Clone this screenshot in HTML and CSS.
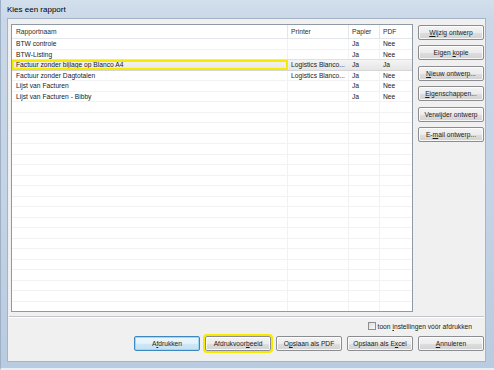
FILE: index.html
```html
<!DOCTYPE html>
<html>
<head>
<meta charset="utf-8">
<link rel="stylesheet" href="styles.css">
</head>
<body>
<div class="window">
  <div class="titlebar"><span class="title">Kies een rapport</span></div>
  <div class="client">
    <div class="top">
      <div class="list">
        <div class="row head"><div class="c c1">Rapportnaam</div><div class="c c2">Printer</div><div class="c c3">Papier</div><div class="c c4">PDF</div></div>
        <div class="row"><div class="c c1">BTW controle</div><div class="c c2"></div><div class="c c3">Ja</div><div class="c c4">Nee</div></div>
        <div class="row"><div class="c c1">BTW-Listing</div><div class="c c2"></div><div class="c c3">Ja</div><div class="c c4">Nee</div></div>
        <div class="row sel"><div class="c c1 mark">Factuur zonder bijlage op Blanco A4</div><div class="c c2">Logistics Blanco...</div><div class="c c3">Ja</div><div class="c c4">Ja</div></div>
        <div class="row"><div class="c c1">Factuur zonder Dagtotalen</div><div class="c c2">Logistics Blanco...</div><div class="c c3">Ja</div><div class="c c4">Nee</div></div>
        <div class="row"><div class="c c1">Lijst van Facturen</div><div class="c c2"></div><div class="c c3">Ja</div><div class="c c4">Nee</div></div>
        <div class="row"><div class="c c1">Lijst van Facturen - Bibby</div><div class="c c2"></div><div class="c c3">Ja</div><div class="c c4">Nee</div></div>
        <div class="row"><div class="c c1"></div><div class="c c2"></div><div class="c c3"></div><div class="c c4"></div></div>
        <div class="row"><div class="c c1"></div><div class="c c2"></div><div class="c c3"></div><div class="c c4"></div></div>
        <div class="row"><div class="c c1"></div><div class="c c2"></div><div class="c c3"></div><div class="c c4"></div></div>
        <div class="row"><div class="c c1"></div><div class="c c2"></div><div class="c c3"></div><div class="c c4"></div></div>
        <div class="row"><div class="c c1"></div><div class="c c2"></div><div class="c c3"></div><div class="c c4"></div></div>
        <div class="row"><div class="c c1"></div><div class="c c2"></div><div class="c c3"></div><div class="c c4"></div></div>
        <div class="row"><div class="c c1"></div><div class="c c2"></div><div class="c c3"></div><div class="c c4"></div></div>
        <div class="row"><div class="c c1"></div><div class="c c2"></div><div class="c c3"></div><div class="c c4"></div></div>
        <div class="row"><div class="c c1"></div><div class="c c2"></div><div class="c c3"></div><div class="c c4"></div></div>
        <div class="row"><div class="c c1"></div><div class="c c2"></div><div class="c c3"></div><div class="c c4"></div></div>
        <div class="row"><div class="c c1"></div><div class="c c2"></div><div class="c c3"></div><div class="c c4"></div></div>
        <div class="row"><div class="c c1"></div><div class="c c2"></div><div class="c c3"></div><div class="c c4"></div></div>
        <div class="row"><div class="c c1"></div><div class="c c2"></div><div class="c c3"></div><div class="c c4"></div></div>
        <div class="row"><div class="c c1"></div><div class="c c2"></div><div class="c c3"></div><div class="c c4"></div></div>
        <div class="row"><div class="c c1"></div><div class="c c2"></div><div class="c c3"></div><div class="c c4"></div></div>
        <div class="row"><div class="c c1"></div><div class="c c2"></div><div class="c c3"></div><div class="c c4"></div></div>
        <div class="row"><div class="c c1"></div><div class="c c2"></div><div class="c c3"></div><div class="c c4"></div></div>
        <div class="row"><div class="c c1"></div><div class="c c2"></div><div class="c c3"></div><div class="c c4"></div></div>
        <div class="row"><div class="c c1"></div><div class="c c2"></div><div class="c c3"></div><div class="c c4"></div></div>
        <div class="row"><div class="c c1"></div><div class="c c2"></div><div class="c c3"></div><div class="c c4"></div></div>
      </div>
      <div class="side">
        <div class="btn"><u>W</u>ijzig ontwerp</div>
        <div class="btn">Eigen <u>k</u>opie</div>
        <div class="btn"><u>N</u>ieuw ontwerp...</div>
        <div class="btn"><u>E</u>igenschappen...</div>
        <div class="btn">Verwi<u>j</u>der ontwerp</div>
        <div class="btn">E-<u>m</u>ail ontwerp...</div>
      </div>
    </div>
    <div class="sep"></div>
    <div class="checkrow"><span class="box"></span><span class="checklabel">toon <u>i</u>nstellingen vóór afdrukken</span></div>
    <div class="actions">
      <div class="btn default">A<u>f</u>drukken</div>
      <div class="btn marked">Afdrukvoor<u>b</u>eeld</div>
      <div class="btn">O<u>p</u>slaan als PDF</div>
      <div class="btn">Opslaan als E<u>x</u>cel</div>
      <div class="btn"><u>A</u>nnuleren</div>
    </div>
  </div>
</div>
</body>
</html>
```

FILE: styles.css
```css
html, body {
  margin: 0;
  padding: 0;
  background: #ffffff;
}

body {
  font-family: "Liberation Sans", Arial, sans-serif;
  font-size: 6.7px;
  color: #000;
}

.window {
  width: 494px;
  height: 370px;
  box-sizing: border-box;
  background: linear-gradient(to bottom, #d3dfec 0px, #c9d7e8 20px, #c4d3e5 200px, #b9cbe0 370px);
  display: flex;
  flex-direction: column;
  border-left: 1px solid #9eb0c6;
  border-bottom: 2px solid #e8eef5;
}

.titlebar {
  height: 18px;
  display: flex;
  align-items: center;
  padding-left: 6px;
}

.title {
  font-size: 8px;
  color: #000;
  padding-top: 1px;
}

.client {
  margin: 0 8px 0 6px;
  height: 344px;
  box-sizing: border-box;
  border: 1px solid #a5b4c6;
  background: #f0f0f0;
  display: flex;
  flex-direction: column;
  padding-right: 1px;
}

.top {
  display: flex;
  gap: 5px;
  padding: 5px 0 0 3px;
}

.list {
  width: 402px;
  height: 288px;
  box-sizing: border-box;
  border: 1px solid #8e9aa8;
  background: #fff;
  overflow: hidden;
}

.row {
  display: grid;
  grid-template-columns: 276px 61px 31px 32px;
  height: 10.5px;
  box-sizing: border-box;
  border-bottom: 1px solid #f2f2f2;
  line-height: 9.5px;
  color: #1a1a1a;
}

.row.head {
  height: 14px;
  line-height: 13px;
  border-bottom: 1px solid #e3e6ea;
  color: #2e2e2e;
}

.c {
  box-sizing: border-box;
  padding-left: 3px;
  border-right: 1px solid #f2f2f2;
  white-space: nowrap;
  overflow: hidden;
}

.c1 {
  padding-left: 4px;
}

.c4 {
  border-right: none;
}

.head .c {
  border-right: 1px solid #e3e6ea;
}

.head .c4 {
  border-right: none;
}

.row.sel {
  background: linear-gradient(to bottom, #f4f4f4, #e6e6e6);
  border-top: 1px solid #e0e0e0;
  border-bottom: 1px solid #d6d6d6;
  margin-top: -1px;
  height: 11.5px;
}

.sel .c {
  border-right-color: transparent;
}

.mark {
  outline: 2px solid #f6ea00;
  outline-offset: -2px;
  line-height: 9.5px;
}

.side {
  width: 66px;
  display: flex;
  flex-direction: column;
  gap: 5.5px;
  padding-top: 0.5px;
}

.btn {
  display: block;
  width: 66px;
  height: 15px;
  box-sizing: border-box;
  border: 1px solid #8b8d90;
  border-radius: 2px;
  background: linear-gradient(to bottom, #f4f4f4 0%, #ececec 50%, #dedede 51%, #d2d2d2 100%);
  box-shadow: inset 0 0 0 1px rgba(255, 255, 255, 0.8);
  text-align: center;
  line-height: 13px;
  white-space: nowrap;
  color: #1a1a1a;
}

.btn u {
  text-decoration-thickness: 0.6px;
  text-underline-offset: 1px;
}

.sep {
  margin-top: 4px;
  margin-left: 1px;
  border-top: 1px solid #c2c6cb;
  border-bottom: 1px solid #ffffff;
}

.checkrow {
  margin-top: 3px;
  height: 10px;
  display: flex;
  align-items: center;
  justify-content: flex-end;
  gap: 2px;
  padding-right: 12px;
}

.box {
  width: 8px;
  height: 8px;
  box-sizing: border-box;
  border: 1px solid #8f8f8f;
  background: linear-gradient(135deg, #dcdcdc, #fbfbfb);
}

.checklabel {
  color: #1a1a1a;
}

.checklabel u {
  text-decoration-thickness: 0.6px;
}

.actions {
  margin-top: 5px;
  display: flex;
  justify-content: flex-end;
  gap: 5px;
}

.btn.default {
  border-color: #3d88bf;
  background: linear-gradient(to bottom, #eef7fd 0%, #e1f1fb 50%, #cfe8f8 51%, #c1e0f5 100%);
  box-shadow: inset 0 0 0 1px #9fd6f4;
}

.btn.marked {
  outline: 2px solid #f6ea00;
  outline-offset: 0;
}
```
